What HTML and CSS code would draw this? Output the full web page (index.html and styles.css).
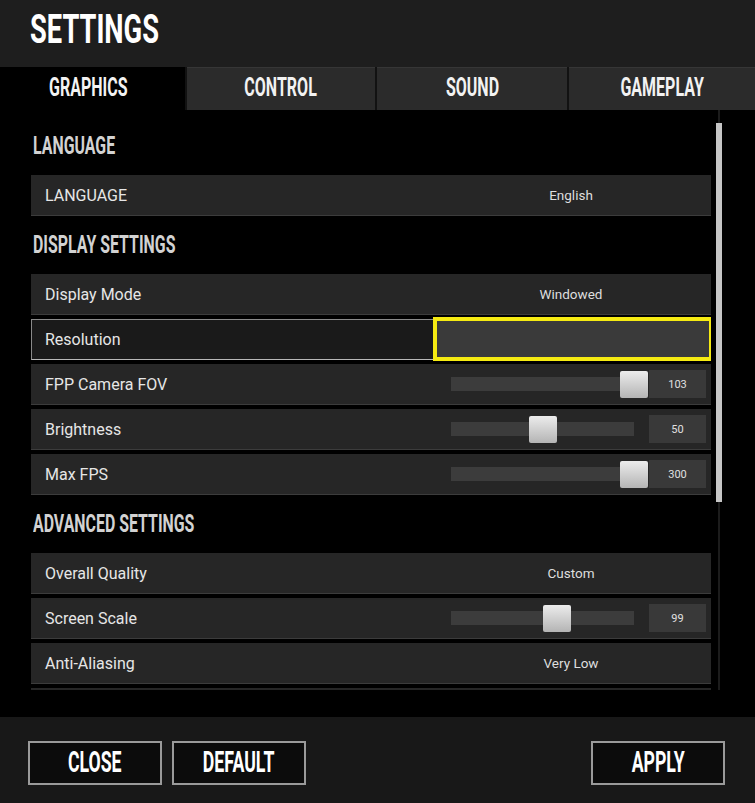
FILE: index.html
```html
<!DOCTYPE html>
<html lang="en">
<head>
  <meta charset="UTF-8" />
  <title>Settings</title>
  <link rel="stylesheet" href="styles.css">
</head>
<body>

  <div class="window">
    <header class="top">
      <h1 class="title"><span class="cond">SETTINGS</span></h1>
    </header>

    <nav class="tabs">
      <div class="tab active"><span class="cond">GRAPHICS</span></div>
      <div class="tab"><span class="cond">CONTROL</span></div>
      <div class="tab"><span class="cond">SOUND</span></div>
      <div class="tab"><span class="cond">GAMEPLAY</span></div>
    </nav>

    <main class="panel">
      <div class="list">
        <h2 class="section"><span class="cond">LANGUAGE</span></h2>
        <div class="row">
          <div class="label">LANGUAGE</div>
          <div class="control"><span class="value">English</span></div>
        </div>

        <h2 class="section"><span class="cond">DISPLAY SETTINGS</span></h2>
        <div class="row">
          <div class="label">Display Mode</div>
          <div class="control"><span class="value">Windowed</span></div>
        </div>
        <div class="row selected">
          <div class="label">Resolution</div>
          <div class="control picker"></div>
        </div>
        <div class="row">
          <div class="label">FPP Camera FOV</div>
          <div class="control slider">
            <div class="track"><div class="knob" style="left: 169px"></div></div>
            <div class="num">103</div>
          </div>
        </div>
        <div class="row">
          <div class="label">Brightness</div>
          <div class="control slider">
            <div class="track"><div class="knob" style="left: 78px"></div></div>
            <div class="num">50</div>
          </div>
        </div>
        <div class="row">
          <div class="label">Max FPS</div>
          <div class="control slider">
            <div class="track"><div class="knob" style="left: 169px"></div></div>
            <div class="num">300</div>
          </div>
        </div>

        <h2 class="section"><span class="cond">ADVANCED SETTINGS</span></h2>
        <div class="row">
          <div class="label">Overall Quality</div>
          <div class="control"><span class="value">Custom</span></div>
        </div>
        <div class="row">
          <div class="label">Screen Scale</div>
          <div class="control slider">
            <div class="track"><div class="knob" style="left: 92px"></div></div>
            <div class="num">99</div>
          </div>
        </div>
        <div class="row">
          <div class="label">Anti-Aliasing</div>
          <div class="control"><span class="value">Very Low</span></div>
        </div>
        <!-- next row, only its top edge shows -->
        <div class="row"></div>
      </div>

      <div class="scrollbar"><div class="scroll-thumb"></div></div>
    </main>

    <footer class="footer">
      <button class="btn"><span class="cond">CLOSE</span></button>
      <button class="btn"><span class="cond">DEFAULT</span></button>
      <button class="btn apply"><span class="cond">APPLY</span></button>
    </footer>
  </div>

</body>
</html>
```

FILE: styles.css
```css
body {
  margin: 0;
  background: #000;
  font-family: 'Roboto', 'Liberation Sans', sans-serif;
  color: #e4e4e4;
}

.window {
  width: 755px;
  height: 803px;
  display: flex;
  flex-direction: column;
  overflow: hidden;
}

/* narrow bold headline text */
.cond {
  display: inline-block;
  font-weight: 700;
  transform: scaleX(0.64);
  white-space: nowrap;
}

.top {
  height: 67px;
  background: #1e1e1e;
  display: flex;
  align-items: center;
  padding: 0 0 8px 30px;
  box-sizing: border-box;
}

.title {
  margin: 0;
  font-size: 41px;
  line-height: 1;
  color: #fff;
}

.title .cond {
  transform: scaleX(0.665);
  transform-origin: left center;
}

.tabs {
  height: 43px;
  display: grid;
  grid-template-columns: 185px 188px 190px 1fr;
  gap: 2px;
  background: #121212;
}

.tab {
  background: #2b2b2b;
  border-top: 1px solid #363636;
  display: flex;
  align-items: center;
  justify-content: center;
  padding-bottom: 4px;
  font-size: 25px;
  line-height: 1;
  color: #f2f2f2;
}

.tab.active {
  background: #000;
  border-top-color: #000;
  padding-right: 8px;
}

.panel {
  flex: 1;
  background: #000;
  display: flex;
  padding-left: 31px;
}

.list {
  width: 680px;
  height: 580px;
  padding-top: 11px;
  box-sizing: border-box;
  overflow: hidden;
}

.section {
  margin: 0;
  height: 54px;
  display: flex;
  align-items: center;
  padding: 0 0 5px 2px;
  box-sizing: border-box;
  font-size: 26.5px;
  line-height: 1;
  color: #d2d2d2;
}

.section .cond {
  transform: scaleX(0.6);
  transform-origin: left center;
}

.row {
  height: 41px;
  margin-bottom: 4px;
  display: flex;
  background: #262626;
  border-bottom: 1px solid #3c3c3c;
  box-sizing: border-box;
}

.label {
  flex: 1;
  display: flex;
  align-items: center;
  padding-left: 14px;
  font-size: 16px;
  color: #e6e6e6;
}

.control {
  width: 272px;
  margin-right: 4px;
  display: flex;
  align-items: center;
  justify-content: center;
}

.value {
  font-size: 13.5px;
  color: #dedede;
}

/* highlighted resolution row */
.row.selected {
  background: transparent;
  border-bottom: none;
}

.row.selected .label {
  background: #1a1a1a;
  border: 1px solid #8a8a8a;
  border-bottom-color: #b8b8b8;
  padding-left: 13px;
}

.picker {
  width: 280px;
  margin: -2px -2px -1px -1px;
  background: #3a3a3a;
  border: 4px solid #f5ea12;
  box-sizing: border-box;
}

.slider {
  justify-content: flex-start;
  padding-left: 16px;
  box-sizing: border-box;
}

.track {
  position: relative;
  width: 183px;
  height: 14px;
  background: #3c3c3c;
}

.knob {
  position: absolute;
  top: -6px;
  width: 28px;
  height: 27px;
  border-radius: 2px;
  background: linear-gradient(#ececec, #b4b4b4);
}

.num {
  width: 57px;
  height: 28px;
  margin-left: 15px;
  background: #393939;
  display: flex;
  align-items: center;
  justify-content: center;
  font-size: 11px;
  color: #e0e0e0;
}

.scrollbar {
  width: 6px;
  height: 580px;
  margin-left: 5px;
  background: linear-gradient(90deg, #000 2px, #1c1c1c 2px, #1c1c1c 4px, #000 4px);
}

.scroll-thumb {
  margin-top: 13px;
  height: 379px;
  background: #c6c6c6;
}

.footer {
  height: 86px;
  background: #181818;
  display: flex;
  align-items: flex-start;
  gap: 10px;
  padding: 24px 30px 0 28px;
  box-sizing: border-box;
}

.btn {
  width: 134px;
  height: 44px;
  background: #0c0c0c;
  border: 2px solid #9a9a9a;
  color: #fff;
  font-family: 'Roboto', 'Liberation Sans', sans-serif;
  font-size: 29.5px;
  line-height: 1;
  padding: 0;
  cursor: pointer;
}

.btn .cond {
  transform: scaleX(0.6);
}

.btn.apply {
  margin-left: auto;
}
```
